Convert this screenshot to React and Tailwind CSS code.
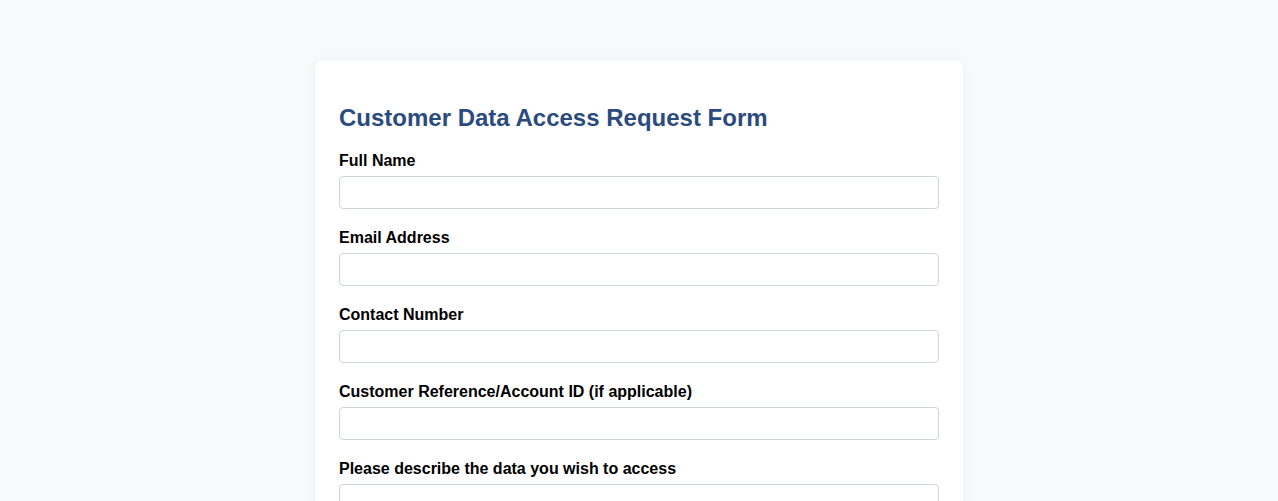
const fields = [
  'Full Name',
  'Email Address',
  'Contact Number',
  'Customer Reference/Account ID (if applicable)',
  'Please describe the data you wish to access',
];

export default function App() {
  return (
    <div className="min-h-screen bg-[#f8f9fb] pt-[60px] font-['Liberation_Sans',Arial,sans-serif]">
      <div className="mx-auto w-[648px] rounded-lg bg-white px-6 pt-[44px] pb-6 shadow-[0_0_10px_rgba(0,0,0,0.05)]">
        <h2 className="mb-5 text-[24px] font-bold leading-[28px] text-[#2b4b7e]">
          Customer Data Access Request Form
        </h2>
        <form>
          {fields.map((label) => (
            <div key={label} className="mb-5">
              <label className="mb-1.5 block text-base font-bold leading-[18px] text-black">{label}</label>
              <input
                type="text"
                className="block h-[33px] w-full rounded border border-[#ced4da] bg-white px-2 text-base"
              />
            </div>
          ))}
        </form>
      </div>
    </div>
  );
}
